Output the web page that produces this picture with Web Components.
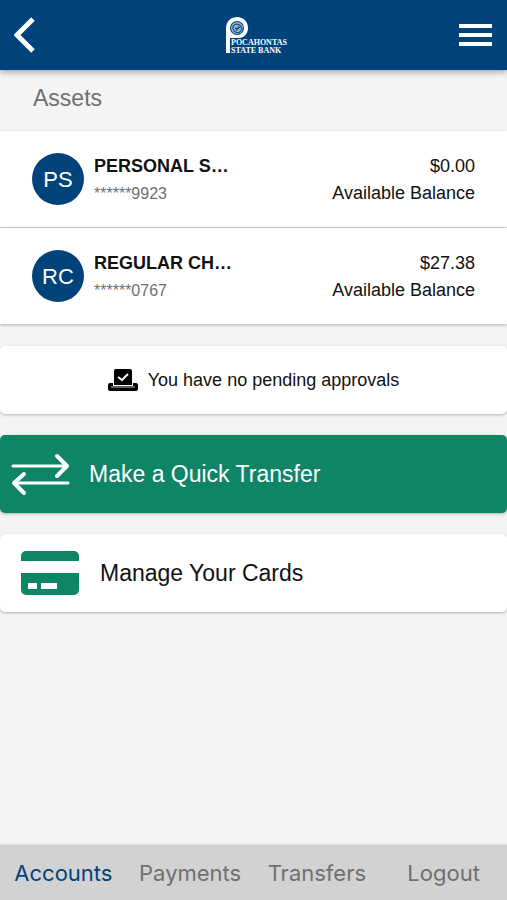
<!DOCTYPE html>
<html lang="en">
<head>
<meta charset="utf-8">
<meta name="viewport" content="width=device-width, initial-scale=1">
<title>Pocahontas State Bank</title>
<style>
  :root {
    --brand: #00427a;
    --accent: #0e8567;
    --page: #f4f4f4;
    --surface: #ffffff;
    --text: #111111;
    --text-muted: #707070;
    --shadow: 0 1px 3px rgba(0, 0, 0, 0.28);
  }

  body {
    margin: 0;
    background: var(--page);
    color: var(--text);
    font-family: "Liberation Sans", Arial, sans-serif;
  }
</style>
</head>
<body>
<bank-app>
  <app-header slot="header"></app-header>
  <account-group label="Assets">
    <account-row initials="PS" name="PERSONAL S…" number="******9923" balance="$0.00"></account-row>
    <account-row initials="RC" name="REGULAR CH…" number="******0767" balance="$27.38"></account-row>
  </account-group>
  <approvals-card>You have no pending approvals</approvals-card>
  <action-card variant="primary">
    <svg slot="icon" width="60" height="44" viewBox="0 0 60 44" fill="none" stroke="currentColor" stroke-linecap="round" stroke-linejoin="round" aria-hidden="true">
      <path stroke-width="3" d="M3 14H57M58 31H4"/>
      <path stroke-width="4" d="M47 4l10 10-10 10M14 22L4 31l10 10"/>
    </svg>
    Make a Quick Transfer
  </action-card>
  <action-card>
    <svg slot="icon" width="58" height="44" viewBox="0 0 58 44" fill="#0e8567" aria-hidden="true">
      <path d="M0 10V5a5 5 0 0 1 5-5h48a5 5 0 0 1 5 5v5z"/>
      <path fill-rule="evenodd" d="M0 22h58v17a5 5 0 0 1-5 5H5a5 5 0 0 1-5-5zM7 32h9v6H7zM20 32h16v6H20z"/>
    </svg>
    Manage Your Cards
  </action-card>
  <tab-bar slot="footer" active="Accounts"></tab-bar>
</bank-app>

<script>
/**
 * Helper: attach an open shadow root with the given markup
 */
function attach(el, html) {
  const template = document.createElement('template');
  template.innerHTML = html;
  el.attachShadow({ mode: 'open' }).appendChild(template.content.cloneNode(true));
}

/** Page shell: header, scrolling content, footer */
class BankApp extends HTMLElement {
  constructor() {
    super();
    attach(this, `
      <style>
        :host {
          display: flex;
          flex-direction: column;
          min-height: 100vh;
        }

        main {
          flex: 1;
          display: flex;
          flex-direction: column;
          gap: 21px;
          padding-bottom: 21px;
        }
      </style>
      <slot name="header"></slot>
      <main><slot></slot></main>
      <slot name="footer"></slot>
    `);
  }
}

class AppHeader extends HTMLElement {
  constructor() {
    super();
    attach(this, `
      <style>
        :host {
          display: block;
          position: sticky;
          top: 0;
          z-index: 1;
          background: var(--brand);
          color: #fff;
          box-shadow: 0 2px 6px rgba(0, 0, 0, 0.35);
        }

        header {
          display: grid;
          grid-template-columns: 1fr auto 1fr;
          align-items: center;
          height: 70px;
          padding: 0 15px 0 14px;
        }

        button {
          display: flex;
          padding: 0;
          border: none;
          background: none;
          color: inherit;
          cursor: pointer;
        }

        .menu {
          justify-self: end;
        }

        svg {
          display: block;
        }
      </style>
      <header>
        <button aria-label="Back">
          <svg width="22" height="36" viewBox="0 0 22 36" fill="none" stroke="currentColor" stroke-width="5">
            <path d="M19 2L3 18l16 16"/>
          </svg>
        </button>
        <svg width="72" height="42" viewBox="-9 -3 72 42" role="img" aria-label="Pocahontas State Bank">
          <path fill="#fff" d="M0 36V12C0 4 5 0 11 0c7 0 11 5 11 11 0 5-3 9-8 10H4v15z"/>
          <circle cx="11" cy="11" r="7" fill="#00427a"/>
          <circle cx="11" cy="11" r="6" fill="#8eb0cf"/>
          <path fill="none" stroke="#00427a" stroke-width="1" d="M7 9l3-2 4 1 2 4-3 4-4-1-2-3zM9 11l3 1 2-2M10 14l3-5"/>
          <text fill="#fff" font-family="Liberation Serif, serif" font-weight="700" font-size="8">
            <tspan x="5" y="28">POCAHONTAS</tspan>
            <tspan x="5" y="36">STATE BANK</tspan>
          </text>
        </svg>
        <button class="menu" aria-label="Menu">
          <svg width="33" height="24" viewBox="0 0 33 24" fill="currentColor">
            <path d="M0 1h33v4H0zM0 10h33v4H0zM0 19h33v4H0z"/>
          </svg>
        </button>
      </header>
    `);
  }
}

class AccountGroup extends HTMLElement {
  constructor() {
    super();
    attach(this, `
      <style>
        :host {
          display: block;
        }

        h2 {
          margin: 0;
          padding: 12px 33px 17px;
          font-size: 23px;
          font-weight: 400;
          line-height: 32px;
          color: var(--text-muted);
        }

        .rows {
          display: flex;
          flex-direction: column;
          gap: 1px;
        }
      </style>
      <h2></h2>
      <div class="rows"><slot></slot></div>
    `);
  }

  connectedCallback() {
    this.shadowRoot.querySelector('h2').textContent = this.getAttribute('label');
  }
}

class AccountRow extends HTMLElement {
  constructor() {
    super();
    attach(this, `
      <style>
        :host {
          display: flex;
          align-items: flex-start;
          gap: 10px;
          padding: 22px 32px 20px;
          background: var(--surface);
          box-shadow: var(--shadow);
          font-size: 18px;
          line-height: 27px;
        }

        .avatar {
          display: flex;
          align-items: center;
          justify-content: center;
          width: 52px;
          height: 52px;
          border-radius: 50%;
          background: var(--brand);
          color: #fff;
          font-size: 22px;
        }

        .details {
          flex: 1;
        }

        .name {
          font-weight: 700;
        }

        .number {
          color: var(--text-muted);
          font-size: 16px;
        }

        .amount {
          text-align: right;
        }
      </style>
      <div class="avatar"></div>
      <div class="details">
        <div class="name"></div>
        <div class="number"></div>
      </div>
      <div class="amount">
        <div class="balance"></div>
        <div>Available Balance</div>
      </div>
    `);
  }

  connectedCallback() {
    const set = (selector, attr) => {
      this.shadowRoot.querySelector(selector).textContent = this.getAttribute(attr);
    };
    set('.avatar', 'initials');
    set('.name', 'name');
    set('.number', 'number');
    set('.balance', 'balance');
  }
}

class ApprovalsCard extends HTMLElement {
  constructor() {
    super();
    attach(this, `
      <style>
        :host {
          display: flex;
          align-items: center;
          justify-content: center;
          gap: 10px;
          margin-top: 1px;
          padding: 20px;
          border-radius: 5px;
          background: var(--surface);
          box-shadow: var(--shadow);
          font-size: 18px;
          line-height: 28px;
        }
      </style>
      <svg width="30" height="22" viewBox="0 0 30 22" aria-hidden="true">
        <path d="M6 2a2 2 0 0 1 2-2h14a2 2 0 0 1 2 2v14H6z"/>
        <path d="M5 14v3h20v-3h3a2 2 0 0 1 2 2v4a2 2 0 0 1-2 2H2a2 2 0 0 1-2-2v-4a2 2 0 0 1 2-2z"/>
        <path stroke="#bbb" d="M3 18h24"/>
        <path fill="none" stroke="#fff" stroke-width="2" d="M10 8l4 3 6-6"/>
      </svg>
      <span><slot></slot></span>
    `);
  }
}

class ActionCard extends HTMLElement {
  constructor() {
    super();
    attach(this, `
      <style>
        :host {
          display: block;
        }

        button {
          display: flex;
          align-items: center;
          gap: 21px;
          width: 100%;
          min-height: 78px;
          padding: 0 21px;
          border: none;
          border-radius: 5px;
          background: var(--surface);
          box-shadow: var(--shadow);
          color: var(--text);
          font: inherit;
          font-size: 23px;
          line-height: 32px;
          text-align: left;
          cursor: pointer;
        }

        :host([variant="primary"]) button {
          gap: 19px;
          padding: 0 10px;
          background: var(--accent);
          color: #fff;
        }
      </style>
      <button><slot name="icon"></slot><span><slot></slot></span></button>
    `);
  }
}

class TabBar extends HTMLElement {
  constructor() {
    super();
    attach(this, `
      <style>
        :host {
          display: block;
          position: sticky;
          bottom: 0;
          background: #d2d2d2;
          box-shadow: 0 -1px 2px rgba(0, 0, 0, 0.1);
        }

        nav {
          display: grid;
          grid-template-columns: repeat(4, 1fr);
        }

        a {
          padding: 14px 0 13px;
          color: var(--text-muted);
          font-family: Inter, sans-serif;
          font-size: 22px;
          line-height: 28px;
          text-align: center;
          text-decoration: none;
        }

        a[aria-current] {
          color: var(--brand);
        }
      </style>
      <nav></nav>
    `);
  }

  connectedCallback() {
    const active = this.getAttribute('active');
    this.shadowRoot.querySelector('nav').innerHTML = ['Accounts', 'Payments', 'Transfers', 'Logout']
      .map((tab) => `<a href="#${tab.toLowerCase()}"${tab === active ? ' aria-current="page"' : ''}>${tab}</a>`)
      .join('');
  }
}

customElements.define('bank-app', BankApp);
customElements.define('app-header', AppHeader);
customElements.define('account-group', AccountGroup);
customElements.define('account-row', AccountRow);
customElements.define('approvals-card', ApprovalsCard);
customElements.define('action-card', ActionCard);
customElements.define('tab-bar', TabBar);
</script>
</body>
</html>
